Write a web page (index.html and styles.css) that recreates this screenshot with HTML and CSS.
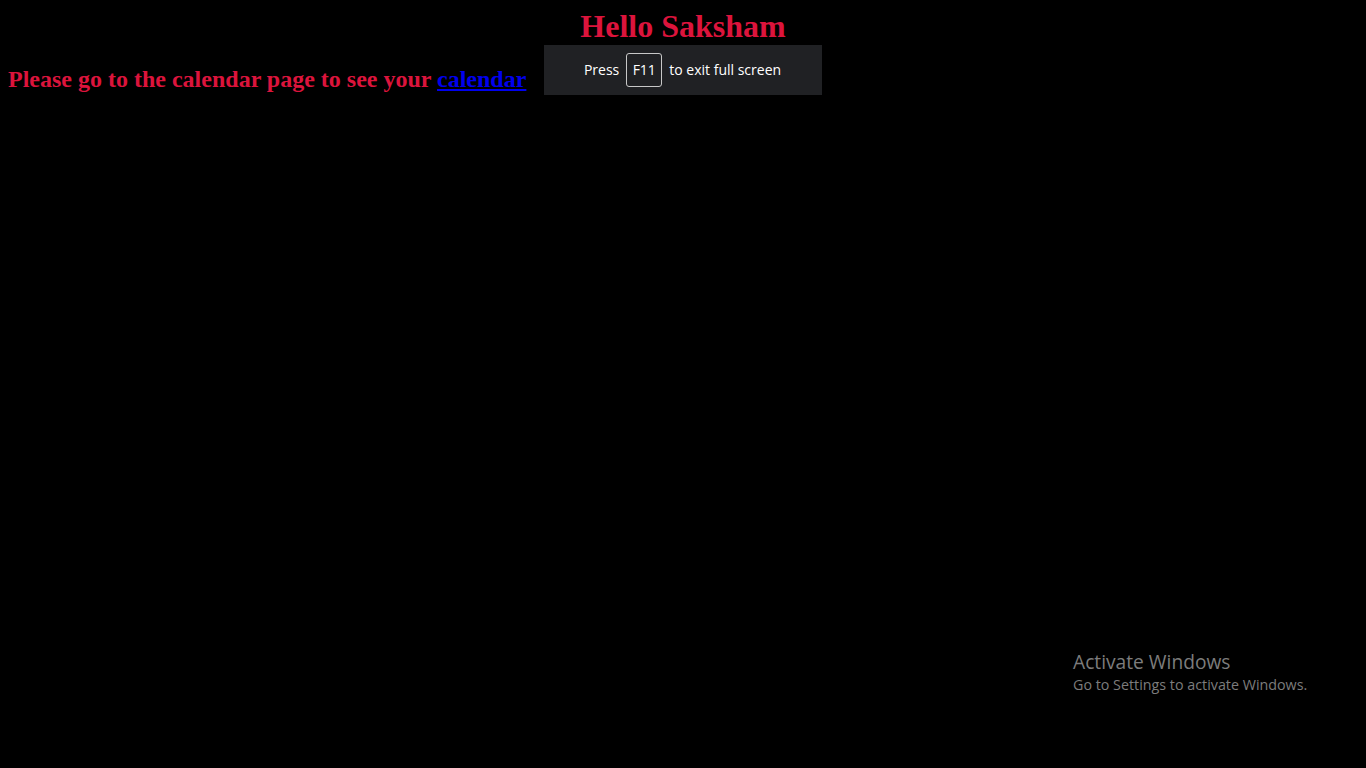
FILE: index.html
```html
<!DOCTYPE html>
<html>
<head>
<meta charset="utf-8">
<link rel="stylesheet" href="styles.css">
</head>
<body>
<h1 class="greeting">Hello Saksham</h1>
<h2 class="message">Please go to the calendar page to see your <a href="#">calendar</a></h2>
<div class="fs-toast">
  <span>Press</span>
  <span class="key">F11</span>
  <span>to exit full screen</span>
</div>
<div class="watermark">
  <div class="wm-title">Activate Windows</div>
  <div class="wm-sub">Go to Settings to activate Windows.</div>
</div>
</body>
</html>
```

FILE: styles.css
```css
html, body {
  background: #000;
}
body {
  margin: 8px;
  font-family: "Liberation Serif", serif;
  height: 752px;
  overflow: hidden;
}
.greeting {
  margin: 0;
  text-align: center;
  color: #dc143c;
  font-size: 32px;
  font-weight: bold;
}
.message {
  margin: 21px 0 0 0;
  color: #dc143c;
  font-size: 24px;
  font-weight: bold;
}
.message a {
  color: #0000ee;
}
.fs-toast {
  position: absolute;
  left: 544px;
  top: 45px;
  width: 278px;
  height: 50px;
  box-sizing: border-box;
  padding-right: 1px;
  background: #202124;
  display: flex;
  align-items: center;
  justify-content: center;
  gap: 7px;
  color: #fff;
  font-family: "Open Sans", "Noto Sans", sans-serif;
  font-size: 14px;
}
.fs-toast span {
  position: relative;
  top: -1px;
}
.fs-toast .key {
  top: 0;
  border: 1px solid #c8c8c8;
  border-radius: 3px;
  width: 34px;
  height: 30px;
  padding-bottom: 2px;
  display: flex;
  align-items: center;
  justify-content: center;
}
.watermark {
  position: absolute;
  left: 1073px;
  top: 650px;
  color: #7c7c7c;
  font-family: "Open Sans", "Noto Sans", sans-serif;
}
.wm-title {
  font-size: 19.2px;
  line-height: 24px;
}
.wm-sub {
  font-size: 14.3px;
  line-height: 21px;
}
```
